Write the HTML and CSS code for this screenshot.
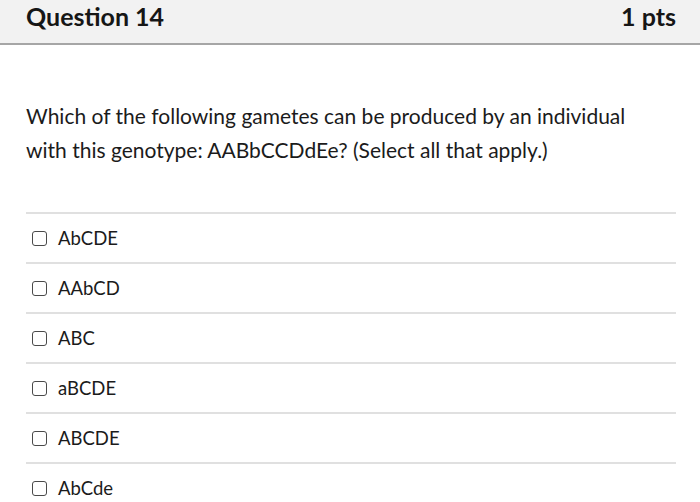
FILE: index.html
```html
<!DOCTYPE html>
<html>
<head>
<meta charset="utf-8">
<link rel="stylesheet" href="styles.css">
</head>
<body>
<div class="header">
  <span class="title">Question 14</span>
  <span class="pts">1 pts</span>
</div>
<div class="content">
  <p class="question">Which of the following gametes can be produced by an individual with this genotype: AABbCCDdEe? (Select all that apply.)</p>
  <div class="answers">
    <div class="answer"><span class="box"></span><span class="label">AbCDE</span></div>
    <div class="answer"><span class="box"></span><span class="label">AAbCD</span></div>
    <div class="answer"><span class="box"></span><span class="label">ABC</span></div>
    <div class="answer"><span class="box"></span><span class="label">aBCDE</span></div>
    <div class="answer"><span class="box"></span><span class="label">ABCDE</span></div>
    <div class="answer"><span class="box"></span><span class="label">AbCde</span></div>
  </div>
</div>
</body>
</html>
```
FILE: styles.css
```css
html, body {
  margin: 0;
  padding: 0;
  background: #fff;
  font-family: Lato, "Liberation Sans", sans-serif;
  color: #1b1b1b;
  overflow: hidden;
}
.header {
  display: flex;
  justify-content: space-between;
  align-items: flex-start;
  height: 42px;
  padding: 1px 24px 0 26px;
  background: #f2f2f2;
  border-bottom: 2px solid #a6a6a6;
}
.title, .pts {
  font-size: 25px;
  line-height: 30px;
  font-weight: 700;
  color: #161616;
}
.content {
  padding: 0 24px 0 26px;
}
.question {
  max-width: 620px;
  margin: 54px 0 45px;
  font-size: 21px;
  line-height: 34px;
}
.answer {
  display: flex;
  align-items: center;
  height: 48px;
  border-top: 2px solid #e0e0e0;
}
.box {
  width: 13px;
  height: 13px;
  border: 1.5px solid #4a4a4a;
  border-radius: 3px;
  margin: 0 11px 0 6px;
}
.label {
  font-size: 18.5px;
}
```
